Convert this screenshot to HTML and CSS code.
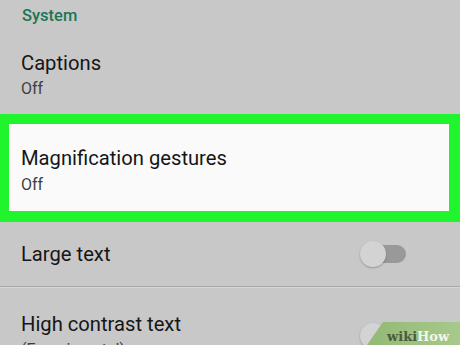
FILE: index.html
```html
<!DOCTYPE html>
<html>
<head>
<meta charset="utf-8">
<link rel="stylesheet" href="styles.css">
</head>
<body>
<div class="screen">
  <div class="section-head">System</div>
  <div class="item">
    <div class="title">Captions</div>
    <div class="sub">Off</div>
  </div>
  <div class="highlight">
    <div class="item item-hl">
      <div class="title">Magnification gestures</div>
      <div class="sub">Off</div>
    </div>
  </div>
  <div class="item row row-single">
    <div class="title">Large text</div>
    <div class="toggle"><span class="track"></span><span class="knob"></span></div>
  </div>
  <div class="item row row-double">
    <div class="texts">
      <div class="title">High contrast text</div>
      <div class="sub">(Experimental)</div>
    </div>
    <div class="toggle"><span class="track"></span><span class="knob"></span></div>
  </div>
  <div class="wikihow"><span class="wiki">wiki</span><span class="how">How</span></div>
</div>
</body>
</html>
```
FILE: styles.css
```css
html, body {
  margin: 0;
  padding: 0;
  overflow: hidden;
  background: #c8c8c8;
}
.screen {
  position: relative;
  width: 460px;
  height: 345px;
  overflow: hidden;
  font-family: Roboto, "Noto Sans", sans-serif;
  background: #c8c8c8;
}
.section-head {
  padding: 6px 21px 12px 22px;
  font-size: 16.5px;
  line-height: 20px;
  font-weight: 500;
  color: #1c7656;
}
.item {
  padding: 13px 21px 15px;
}
.title {
  font-size: 20.2px;
  line-height: 24px;
  color: #161616;
}
.sub {
  margin-top: 4px;
  font-size: 16px;
  line-height: 20px;
  color: #3e3e3e;
}
.highlight {
  border-style: solid;
  border-color: #1ff42c;
  border-width: 10px 11px 11px 9px;
  background: #fafafa;
}
.item-hl {
  padding: 22px 12px 16px;
}
.item-hl .sub {
  margin-top: 5px;
}
.row {
  display: flex;
  align-items: center;
  justify-content: space-between;
  padding-right: 53px;
}
.row-single {
  height: 65px;
  padding-top: 0;
  padding-bottom: 0;
  box-sizing: border-box;
  border-bottom: 1px solid #a8a8a8;
  box-shadow: 0 1px 0 #d6d6d6;
}
.row-double {
  padding-top: 25px;
}
.toggle {
  position: relative;
  width: 47px;
  height: 26px;
}
.track {
  position: absolute;
  left: 10px;
  top: 4px;
  width: 36px;
  height: 18px;
  border-radius: 9px;
  background: #999999;
}
.knob {
  position: absolute;
  left: 0;
  top: 0;
  width: 26px;
  height: 26px;
  border-radius: 50%;
  background: #d3d3d3;
  box-shadow: 0 1px 2px rgba(0,0,0,0.25);
}
.wikihow {
  position: absolute;
  right: 0;
  bottom: 0;
  width: 93px;
  height: 23px;
  padding-left: 20px;
  box-sizing: border-box;
  background: linear-gradient(90deg, #93b975, #a7c98c);
  clip-path: polygon(16px 0, 100% 0, 100% 100%, 0 100%);
  font-family: "DejaVu Serif", serif;
  font-weight: bold;
  font-size: 13px;
  line-height: 23px;
  padding-top: 3px;
}
.wiki {
  color: #4b5a3c;
}
.how {
  color: #f2f7ec;
}
```
